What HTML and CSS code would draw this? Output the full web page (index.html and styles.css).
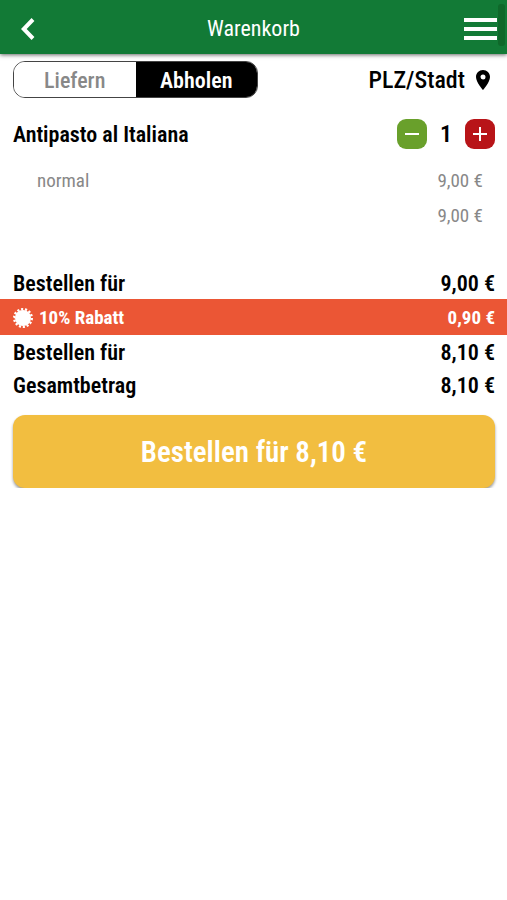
FILE: index.html
```
<!DOCTYPE html>
<html lang="de">
<head>
    <meta charset="UTF-8">
    <meta name="viewport" content="width=device-width, initial-scale=1.0">
    <title>Warenkorb</title>
    <link rel="stylesheet" href="styles.css">
</head>
<body>
    <header class="topbar">
        <button class="icon-button" type="button" aria-label="Zurück">
            <svg width="14" height="22" viewBox="0 0 14 22"><path d="M12 1.5 2.8 11l9.2 9.5" fill="none" stroke="#fff" stroke-width="4"/></svg>
        </button>
        <h1>Warenkorb</h1>
        <button class="icon-button menu-button" type="button" aria-label="Menü">
            <svg width="33" height="24" viewBox="0 0 33 24"><path d="M0 3h33M0 12h33M0 21h33" stroke="#fff" stroke-width="4"/></svg>
        </button>
        <span class="scroll-thumb"></span>
    </header>

    <main>
        <div class="row delivery">
            <div class="toggle">
                <button type="button">Liefern</button>
                <button type="button" class="active">Abholen</button>
            </div>
            <a href="#" class="location">
                PLZ/Stadt
                <svg width="14" height="20" viewBox="0 0 14 20"><path fill-rule="evenodd" d="M7 0C3.1 0 0 3.1 0 7c0 5.2 7 13 7 13s7-7.8 7-13c0-3.9-3.1-7-7-7zm0 4.5a2.5 2.5 0 1 1 0 5 2.5 2.5 0 0 1 0-5z"/></svg>
            </a>
        </div>

        <section class="item">
            <div class="row item-head">
                <h2>Antipasto al Italiana</h2>
                <div class="stepper">
                    <button type="button" class="minus" aria-label="Weniger">
                        <svg width="14" height="14" viewBox="0 0 14 14"><path d="M0 7h14" stroke="#fff" stroke-width="2"/></svg>
                    </button>
                    <span>1</span>
                    <button type="button" class="plus" aria-label="Mehr">
                        <svg width="14" height="14" viewBox="0 0 14 14"><path d="M0 7h14M7 0v14" stroke="#fff" stroke-width="2"/></svg>
                    </button>
                </div>
            </div>
            <div class="row option"><span>normal</span><span>9,00 €</span></div>
            <div class="row option"><span></span><span>9,00 €</span></div>
        </section>

        <section class="totals">
            <div class="row total"><span>Bestellen für</span><span>9,00 €</span></div>
            <div class="row discount">
                <span class="discount-label">
                    <svg width="20" height="20" viewBox="-10 -10 20 20" fill="#fff">
                        <circle r="8"/>
                        <circle r="8.8" fill="none" stroke="#fff" stroke-width="2.4" pathLength="56" stroke-dasharray="2.2 1.8"/>
                    </svg>
                    10% Rabatt
                </span>
                <span>0,90 €</span>
            </div>
            <div class="row total"><span>Bestellen für</span><span>8,10 €</span></div>
            <div class="row total"><span>Gesamtbetrag</span><span>8,10 €</span></div>
        </section>

        <button type="button" class="order-button">Bestellen für 8,10 €</button>
    </main>
</body>
</html>
```
FILE: styles.css
```
* {
    box-sizing: border-box;
}

body {
    margin: 0;
    background: #fff;
    color: #000;
    font-family: "Roboto Condensed", "Liberation Sans Narrow", Roboto, sans-serif;
    font-size: 22px;
    line-height: 33px;
}

button {
    border: none;
    padding: 0;
    font: inherit;
    color: inherit;
    cursor: pointer;
}

svg {
    display: block;
}

h1, h2 {
    margin: 0;
    font-size: 22px;
}

.topbar {
    position: relative;
    display: grid;
    grid-template-columns: 1fr auto 1fr;
    align-items: center;
    height: 54px;
    padding: 3px 10px 0;
    background: #127a36;
    color: #fff;
    box-shadow: 0 1px 4px rgba(0, 0, 0, 0.6);
}

.topbar h1 {
    font-weight: 400;
}

.icon-button {
    justify-self: start;
    margin-left: 11px;
    background: none;
}

.menu-button {
    justify-self: end;
}

.scroll-thumb {
    position: absolute;
    top: 4px;
    right: 2px;
    width: 7px;
    height: 42px;
    border-radius: 3px;
    background: #0f682a;
}

.row {
    display: flex;
    justify-content: space-between;
    align-items: center;
    padding: 0 12px 0 13px;
}

.delivery {
    padding-top: 7px;
    font-weight: 500;
}

.toggle {
    display: grid;
    grid-template-columns: 1fr 1fr;
    width: 245px;
    height: 37px;
    border: 1px solid #444;
    border-radius: 12px;
    overflow: hidden;
}

.toggle button {
    padding-top: 2px;
    background: #fff;
    color: #888;
    font-weight: 500;
}

.toggle .active {
    background: #000;
    color: #fff;
    font-weight: 600;
}

.location {
    display: flex;
    align-items: center;
    gap: 11px;
    padding: 1px 5px 0 0;
    color: #000;
    font-size: 24px;
    text-decoration: none;
}

.item {
    padding: 17px 0 33px;
}

.item-head {
    height: 38px;
    margin-bottom: 10px;
}

.item-head h2 {
    font-weight: 600;
}

.stepper {
    display: flex;
    align-items: center;
    gap: 13px;
    font-size: 24px;
    font-weight: 600;
}

.stepper button {
    display: grid;
    place-items: center;
    width: 30px;
    height: 30px;
    border-radius: 9px;
}

.minus {
    background: #69a02b;
}

.plus {
    background: #b81418;
}

.option {
    height: 35px;
    padding: 0 24px 0 37px;
    color: #888;
    font-size: 19px;
}

.total {
    height: 33px;
    padding-top: 2px;
    font-weight: 600;
}

.discount {
    height: 36px;
    padding-top: 1px;
    background: #eb5635;
    color: #fff;
    font-size: 19px;
    font-weight: 700;
}

.discount-label {
    display: flex;
    align-items: center;
    gap: 6px;
}

.order-button {
    display: block;
    width: calc(100% - 25px);
    height: 73px;
    margin: 14px 12px 0 13px;
    padding-top: 2px;
    border-radius: 12px;
    background: #f2be40;
    color: #fff;
    font-size: 29px;
    font-weight: 600;
    box-shadow: 0 2px 3px rgba(0, 0, 0, 0.4);
}
```
